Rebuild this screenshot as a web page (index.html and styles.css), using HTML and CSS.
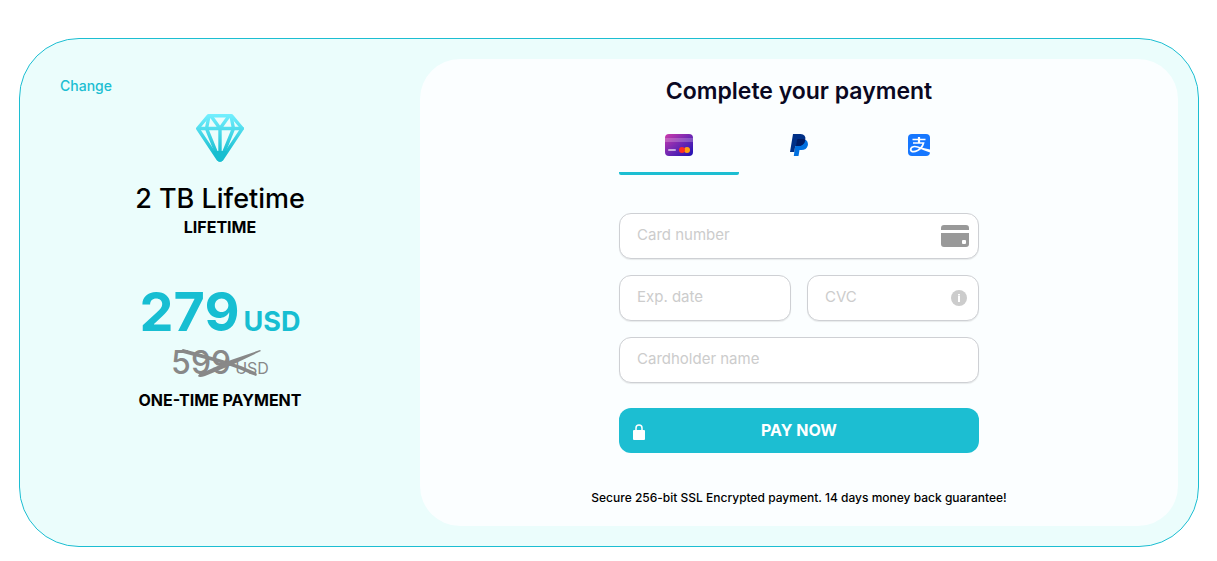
FILE: index.html
```html
<!DOCTYPE html>
<html lang="en">
<head>
  <meta charset="UTF-8" />
  <meta name="viewport" content="width=device-width, initial-scale=1.0" />
  <title>Complete your payment</title>
  <link rel="stylesheet" href="styles.css">
</head>
<body>
  <main class="checkout">
    <!-- Left Column: Selected plan -->
    <section class="plan">
      <a class="change-link" href="#">Change</a>
      <svg class="diamond" viewBox="0 0 48 48" aria-hidden="true">
        <defs>
          <linearGradient id="diamondFill" gradientUnits="userSpaceOnUse" x1="0" y1="0" x2="0" y2="40">
            <stop offset="0" stop-color="#74f0ff" />
            <stop offset="1" stop-color="#17bed0" />
          </linearGradient>
        </defs>
        <g fill="none" stroke="url(#diamondFill)" stroke-width="3.4" stroke-linejoin="round">
          <path d="M12.500 1.700H35.500L46.300 14.500 26 45Q24 47 22 45L1.700 14.500Z" />
          <path d="M1.700 14.500H46.300L46.200 14.600M13 2L10.500 14.500 22.500 44M35 2L37.500 14.500 25.500 44M15 2L24 14.500 33 2M24 14.500L24.010 44" />
        </g>
        <path d="M17 37H31L26.500 46.500Q24 49 21.500 46.500Z" fill="#17bed0" />
      </svg>
      <h2>2 TB Lifetime</h2>
      <p class="label">LIFETIME</p>
      <p class="price">279 <span>USD</span></p>
      <p class="old-price">
        599 <span>USD</span>
        <svg class="strike" viewBox="0 0 82 28" aria-hidden="true">
          <path d="M4 0Q1 1 4 4L34 12Q54 17 67 23L77 27Q79 25 76 23L62 17Q45 11 26 6Z" />
          <path d="M81 1L82 2 55 15 26 27Q20 29 19 27 20 24 25 23L52 11Z" />
        </svg>
      </p>
      <p class="label">ONE-TIME PAYMENT</p>
    </section>

    <!-- Right Column: Payment form -->
    <section class="payment">
      <h1>Complete your payment</h1>
      <div class="methods">
        <button class="method active" type="button" aria-label="Credit card">
          <svg width="28" height="22" viewBox="0 0 28 22">
            <defs>
              <linearGradient id="cardFill" x1="0" y1="0" x2="1" y2="1">
                <stop offset="0" stop-color="#cc3aab" />
                <stop offset=".5" stop-color="#7128b3" />
                <stop offset="1" stop-color="#1c10b5" />
              </linearGradient>
            </defs>
            <rect width="28" height="22" rx="4" fill="url(#cardFill)" />
            <path d="M0 4H28V8H0Z" fill="#fff" opacity=".22" />
            <rect x="3" y="15" width="8" height="2" rx="1" fill="#fff" opacity=".6" />
            <circle cx="22" cy="16" r="3" fill="#ff9f10" />
            <circle cx="17" cy="16" r="3" fill="#ff2d25" />
          </svg>
        </button>
        <button class="method" type="button" aria-label="PayPal">
          <svg width="18" height="22" viewBox="0 0 18 22">
            <path d="M7 6H16Q18.500 8 17.800 11.500 16.500 16 11.500 16H9.500L8.500 22H3.800L5 13Z" fill="#0070e0" />
            <path d="M3 0H10.500Q16.300 .5 15.300 6 14 12 8 12H5.200L4.300 18H0Z" fill="#003087" />
            <path d="M7 6Q7.200 5 8.200 5H13.500Q14.600 5.200 15.300 6 14 12 8 12H6Z" fill="#001c64" />
          </svg>
        </button>
        <button class="method" type="button" aria-label="Alipay">
          <svg width="22" height="22" viewBox="0 0 22 22">
            <rect width="22" height="22" rx="4" fill="#1677ff" />
            <g fill="none" stroke="#fff">
              <path d="M4.500 5.500H17.500M5 9H15.500Q14.500 13.500 9.500 16.600 5.500 18.600 3.200 17 1.800 15 4 13.200 7 11.400 13 14.300" stroke-width="1.700" />
              <path d="M11 3V9" stroke-width="2.200" />
            </g>
            <path d="M12 13Q16 14.300 22 15.500V18.500Q15.500 16.500 11 14.300Z" fill="#fff" />
          </svg>
        </button>
      </div>

      <form class="card-form">
        <div class="field">
          <input type="text" placeholder="Card number" aria-label="Card number">
          <svg class="card-icon" viewBox="0 0 28 22" aria-hidden="true">
            <path d="M0 5V3Q0 0 3 0H25Q28 0 28 3V5ZM0 8H28V19Q28 22 25 22H3Q0 22 0 19ZM22 15Q21 15 21 16V18Q21 19 22 19H24Q25 19 25 18V16Q25 15 24 15Z" fill="#999" fill-rule="evenodd" />
          </svg>
        </div>
        <div class="field-row">
          <div class="field">
            <input type="text" placeholder="Exp. date" aria-label="Exp. date">
          </div>
          <div class="field">
            <input type="text" placeholder="CVC" aria-label="CVC">
            <svg class="info-icon" viewBox="0 0 16 16" aria-hidden="true">
              <circle cx="8" cy="8" r="8" fill="#ccc" />
              <path d="M7 4H9V5.500H7ZM7 6H9V12H7Z" fill="#fff" />
            </svg>
          </div>
        </div>
        <div class="field">
          <input type="text" placeholder="Cardholder name" aria-label="Cardholder name">
        </div>
        <button class="pay-button" type="submit">
          <svg class="lock-icon" viewBox="0 0 12 16" aria-hidden="true">
            <path d="M3 7V4Q3 1 6 1T9 4V7" fill="none" stroke="#fff" stroke-width="1.500" />
            <rect y="6" width="12" height="10" rx="1" fill="#fff" />
          </svg>
          PAY NOW
        </button>
      </form>
      <p class="secure">Secure 256-bit SSL Encrypted payment. 14 days money back guarantee!</p>
    </section>
  </main>
</body>
</html>
```
FILE: styles.css
```css
/* Base Styles */
*, *::before, *::after {
  box-sizing: border-box;
}
body {
  margin: 0;
  padding: 38px 18px 14px 19px;
  font-family: Inter, "Liberation Sans", sans-serif;
  background: #fff;
  color: #000;
}
h1, h2, p {
  margin: 0;
}
button, input {
  font-family: inherit;
}

.checkout {
  display: flex;
  padding: 20px 20px 20px 0;
  border: 1px solid #1cbed2;
  border-radius: 60px;
  background: #ebfdfc;
}

/* Plan Column */
.plan {
  flex: 0 0 400px;
  display: flex;
  flex-direction: column;
  align-items: center;
  padding-top: 16px;
}
.change-link {
  align-self: flex-start;
  margin-left: 40px;
  font-size: 14px;
  font-weight: 500;
  line-height: 22px;
  color: #1cbed2;
  text-decoration: none;
}
.diamond {
  width: 48px;
  height: 48px;
  margin: 17px 0 19px;
}
.plan h2 {
  font-size: 27px;
  font-weight: 500;
  line-height: 36px;
}
.label {
  font-size: 16px;
  font-weight: 700;
  line-height: 20px;
}
.price {
  margin-top: 48px;
  font-size: 54px;
  font-weight: 700;
  line-height: 54px;
  color: #17bed2;
}
.price,
.old-price {
  display: flex;
  align-items: baseline;
  gap: 4px;
}
.price span {
  font-size: 27px;
}
.old-price {
  position: relative;
  margin-bottom: 8px;
  font-size: 32px;
  font-weight: 500;
  line-height: 28px;
  color: #888;
}
.old-price span {
  font-size: 16px;
  font-weight: 400;
}
.strike {
  position: absolute;
  left: 8px;
  top: 0;
  width: 82px;
  height: 28px;
  fill: #888;
}

/* Payment Column */
.payment {
  flex: 1;
  display: flex;
  flex-direction: column;
  align-items: center;
  padding: 16px 20px;
  border-radius: 40px;
  background: #fbfeff;
}
.payment h1 {
  font-size: 23px;
  font-weight: 600;
  line-height: 32px;
  color: #0a0822;
}
.methods {
  display: flex;
  width: 100%;
  max-width: 360px;
  margin-top: 10px;
}
.method {
  flex: 1;
  display: flex;
  justify-content: center;
  align-items: center;
  height: 58px;
  padding: 0;
  border: 0;
  border-bottom: 3px solid transparent;
  border-radius: 2px;
  background: none;
  cursor: pointer;
}
.method.active {
  border-bottom-color: #1cbed2;
}

/* Card Form */
.card-form {
  display: flex;
  flex-direction: column;
  gap: 16px;
  width: 100%;
  max-width: 360px;
  margin-top: 38px;
}
.field {
  position: relative;
  flex: 1;
}
.field-row {
  display: flex;
  gap: 16px;
}
.field input {
  display: block;
  width: 100%;
  height: 46px;
  padding: 0 17px 3px;
  border: 1px solid #ced0d4;
  border-radius: 12px;
  background: #fff;
  box-shadow: 0 1px 1px rgba(0, 0, 0, 0.08);
  font-size: 15px;
}
.field input::placeholder {
  color: #ccc;
}
.card-icon {
  position: absolute;
  top: 12px;
  right: 10px;
  width: 28px;
  height: 22px;
}
.info-icon {
  position: absolute;
  top: 15px;
  right: 12px;
  width: 16px;
  height: 16px;
}
.pay-button {
  position: relative;
  height: 45px;
  margin-top: 9px;
  padding: 0 0 2px;
  border: 0;
  border-radius: 12px;
  background: #1cbed2;
  color: #fff;
  font-size: 16px;
  font-weight: 700;
  cursor: pointer;
}
.lock-icon {
  position: absolute;
  top: 16px;
  left: 14px;
  width: 12px;
  height: 16px;
}
.secure {
  margin-top: 35px;
  padding-bottom: 2px;
  font-size: 12px;
  font-weight: 500;
  line-height: 20px;
}
```
